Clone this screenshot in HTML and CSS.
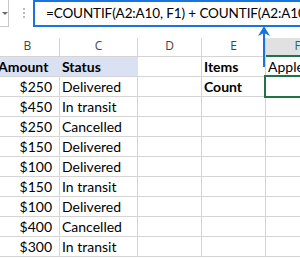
FILE: index.html
```html
<!DOCTYPE html>
<html>
<head>
<meta charset="utf-8">
<link rel="stylesheet" href="styles.css">
</head>
<body>
<div class="app">
  <div class="fbar">
    <div class="namebox"><span class="caret"></span></div>
    <div class="dots"><span class="dot"></span><span class="dot"></span><span class="dot"></span></div>
    <div class="formula">=COUNTIF(A2:A10, F1) + COUNTIF(A2:A10, F2)</div>
  </div>
  <div class="grid">
    <div class="h">B</div><div class="h">C</div><div class="h">D</div><div class="h">E</div><div class="h sel">F</div>

    <div class="c b fill fill-r">Amount</div><div class="c b fill fill-r">Status</div><div class="c"></div><div class="c b">Items</div><div class="c">Apple</div>
    <div class="c num">$250</div><div class="c">Delivered</div><div class="c"></div><div class="c b">Count</div><div class="c"></div>
    <div class="c num">$450</div><div class="c">In transit</div><div class="c"></div><div class="c"></div><div class="c"></div>
    <div class="c num">$250</div><div class="c">Cancelled</div><div class="c"></div><div class="c"></div><div class="c"></div>
    <div class="c num">$150</div><div class="c">Delivered</div><div class="c"></div><div class="c"></div><div class="c"></div>
    <div class="c num">$100</div><div class="c">Delivered</div><div class="c"></div><div class="c"></div><div class="c"></div>
    <div class="c num">$150</div><div class="c">In transit</div><div class="c"></div><div class="c"></div><div class="c"></div>
    <div class="c num">$100</div><div class="c">Delivered</div><div class="c"></div><div class="c"></div><div class="c"></div>
    <div class="c num">$400</div><div class="c">Cancelled</div><div class="c"></div><div class="c"></div><div class="c"></div>
    <div class="c num">$300</div><div class="c">In transit</div><div class="c"></div><div class="c"></div><div class="c"></div>
  </div>
  <div class="selection"></div>
  <svg class="arrow" width="14" height="42" viewBox="0 0 14 42">
    <rect x="6" y="4" width="2" height="37" fill="#1a74e0"/>
    <path d="M7 0 L13 10 L7 7 L1 10 Z" fill="#1a74e0"/>
  </svg>
</div>
</body>
</html>
```

FILE: styles.css
```css
html, body {
  margin: 0;
  padding: 0;
  background: #fff;
}
body {
  width: 300px;
  height: 258px;
  overflow: hidden;
  font-family: Lato, "Open Sans", sans-serif;
  color: #111;
}
.app {
  position: relative;
  width: 300px;
  height: 258px;
  overflow: hidden;
}
.fbar {
  display: flex;
  align-items: flex-start;
  height: 27px;
}
.namebox {
  box-sizing: border-box;
  width: 13px;
  height: 27px;
  border-right: 1px solid #c8c8c8;
  border-bottom: 1px solid #c8c8c8;
  display: flex;
  align-items: center;
  padding-left: 2px;
}
.caret {
  width: 0;
  height: 0;
  border-left: 3.5px solid transparent;
  border-right: 3.5px solid transparent;
  border-top: 3.5px solid #6a6a6a;
}
.dots {
  margin-left: 14px;
  margin-top: 8px;
  display: flex;
  flex-direction: column;
  gap: 2px;
}
.dot {
  display: block;
  width: 2px;
  height: 2px;
  border-radius: 1px;
  background: #a6a6a6;
}
.formula {
  box-sizing: border-box;
  margin-left: 8px;
  flex: none;
  width: 290px;
  height: 27px;
  border: 2px solid #1a74e0;
  padding-left: 11px;
  font-size: 13.5px;
  letter-spacing: -0.12px;
  line-height: 22px;
  white-space: nowrap;
  overflow: hidden;
  color: #000;
}
.grid {
  display: grid;
  grid-template-columns: 64px 78px 64px 64px 64px;
  margin-top: 11px;
  margin-left: -4px;
}
.h {
  box-sizing: border-box;
  height: 19px;
  border-right: 1px solid #d4d4d4;
  border-bottom: 1px solid #d4d4d4;
  text-align: center;
  font-family: "Open Sans", sans-serif;
  font-size: 12px;
  line-height: 15px;
  color: #444;
}
.h.sel {
  background: #e1e1e1;
  border-bottom: 2px solid #217346;
  color: #217346;
}
.c {
  box-sizing: border-box;
  height: 20px;
  border-right: 1px solid #d4d4d4;
  border-bottom: 1px solid #d4d4d4;
  padding: 0 2px;
  font-size: 14px;
  line-height: 19px;
  white-space: nowrap;
  color: #000;
}
.b {
  font-weight: bold;
}
.fill {
  background: #d9e1f2;
}
.fill-r {
  border-right-color: #d9e1f2;
}
.num {
  text-align: right;
  padding-right: 7px;
}
.selection {
  position: absolute;
  left: 264px;
  top: 75px;
  width: 70px;
  height: 23px;
  box-sizing: border-box;
  border: 2px solid #217346;
}
.arrow {
  position: absolute;
  left: 257px;
  top: 26px;
}
```
